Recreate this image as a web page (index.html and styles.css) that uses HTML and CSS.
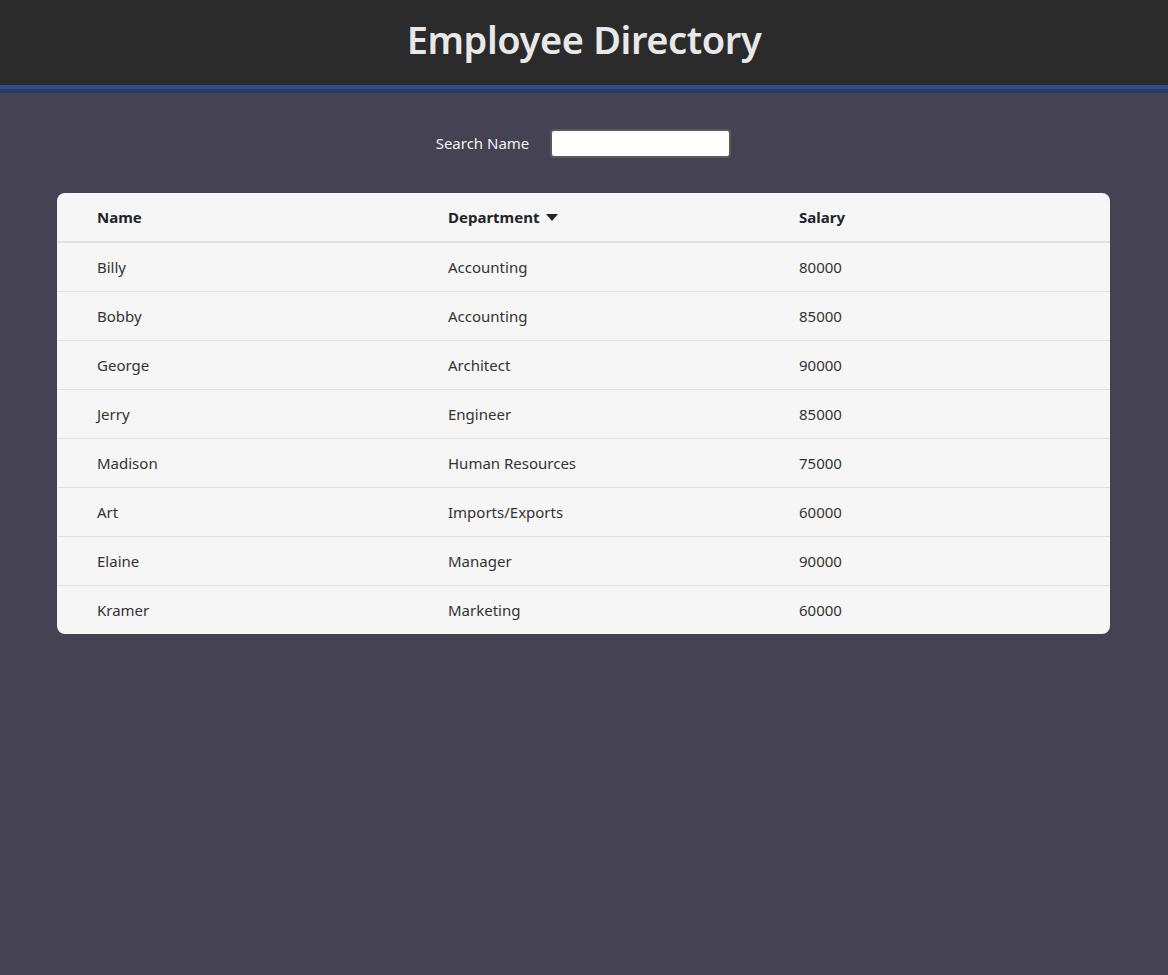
FILE: index.html
```html
<!DOCTYPE html>
<html lang="en">
<head>
<meta charset="utf-8">
<title>Employee Directory</title>
<link rel="stylesheet" href="styles.css">
</head>
<body>
<header class="top">
  <h1 class="title">Employee Directory</h1>
</header>
<main class="content">
  <div class="search">
    <label class="search-label" for="q">Search Name</label>
    <input class="search-input" id="q" type="text">
  </div>
  <div class="card">
    <table class="table">
      <thead>
        <tr>
          <th>Name</th>
          <th>Department <span class="caret"></span></th>
          <th>Salary</th>
        </tr>
      </thead>
      <tbody>
        <tr><td>Billy</td><td>Accounting</td><td>80000</td></tr>
        <tr><td>Bobby</td><td>Accounting</td><td>85000</td></tr>
        <tr><td>George</td><td>Architect</td><td>90000</td></tr>
        <tr><td>Jerry</td><td>Engineer</td><td>85000</td></tr>
        <tr><td>Madison</td><td>Human Resources</td><td>75000</td></tr>
        <tr><td>Art</td><td>Imports/Exports</td><td>60000</td></tr>
        <tr><td>Elaine</td><td>Manager</td><td>90000</td></tr>
        <tr><td>Kramer</td><td>Marketing</td><td>60000</td></tr>
      </tbody>
    </table>
  </div>
</main>
</body>
</html>
```

FILE: styles.css
```css
html, body {
  margin: 0;
  padding: 0;
}
body {
  background: #444253;
  font-family: "Noto Sans", "Open Sans", sans-serif;
  min-height: 975px;
}
.top {
  background: #2b2b2b;
  height: 85px;
  border-bottom: 4px solid #2d4e8c;
  box-shadow: 0 4px 0 #283b66;
  display: flex;
  align-items: center;
  justify-content: center;
}
.title {
  margin: 0;
  color: #e8e8e8;
  font-size: 38px;
  font-weight: 600;
  letter-spacing: -0.4px;
  line-height: 1;
  padding-bottom: 8px;
}
.content {
  padding: 40px 58px 0 57px;
}
.search {
  display: flex;
  justify-content: center;
  align-items: center;
  gap: 21px;
  height: 28px;
}
.search-label {
  color: #f2f2f2;
  font-size: 15px;
}
.search-input {
  box-sizing: border-box;
  width: 181px;
  height: 29px;
  border: 2px solid #5a5a5a;
  border-radius: 4px;
  background: #fff;
  margin: 0;
}
.card {
  margin-top: 36px;
  background: #f6f6f6;
  border-radius: 8px;
  overflow: hidden;
}
.table {
  width: 100%;
  border-collapse: collapse;
  table-layout: fixed;
  font-size: 15px;
}
.table th {
  text-align: left;
  font-weight: 700;
  height: 48px;
  padding: 0 0 0 40px;
  border-bottom: 2px solid #dee2e6;
  color: #212529;
}
.table td {
  height: 48px;
  padding: 0 0 0 40px;
  border-top: 1px solid #dee2e6;
  color: #333;
}
.table tbody tr:first-child td {
  border-top: none;
}
.caret {
  display: inline-block;
  width: 0;
  height: 0;
  border-left: 6px solid transparent;
  border-right: 6px solid transparent;
  border-top: 7px solid #212529;
  margin-left: 3px;
  vertical-align: 2px;
}
```
